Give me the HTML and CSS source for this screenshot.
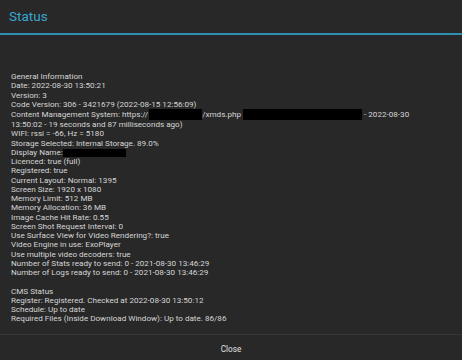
FILE: index.html
```html
<!DOCTYPE html>
<html>
<head>
<meta charset="utf-8">
<link rel="stylesheet" href="styles.css">
</head>
<body>
<div class="dialog">
  <header class="head">
    <h1 class="title">Status</h1>
  </header>
  <main class="body">
    <div class="info">General Information<br>Date: 2022-08-30 13:50:21<br>Version: 3<br>Code Version: 306 - 3421679 (2022-08-15 12:56:09)<br>Content Management System: https://<span class="redact r1"></span>/xmds.php <span class="redact r2"></span> - 2022-08-30<br>13:50:02 - 19 seconds and 87 milliseconds ago)<br>WIFI: rssi = -66, Hz = 5180<br>Storage Selected: Internal Storage. 89.0%<br>Display Name:<span class="redact r3"></span><br>Licenced: true (full)<br>Registered: true<br>Current Layout: Normal: 1395<br>Screen Size: 1920 x 1080<br>Memory Limit: 512 MB<br>Memory Allocation: 36 MB<br>Image Cache Hit Rate: 0.55<br>Screen Shot Request Interval: 0<br>Use Surface View for Video Rendering?: true<br>Video Engine in use: ExoPlayer<br>Use multiple video decoders: true<br>Number of Stats ready to send: 0 - 2021-08-30 13:46:29<br>Number of Logs ready to send: 0 - 2021-08-30 13:46:29<br><br>CMS Status<br>Register: Registered. Checked at 2022-08-30 13:50:12<br>Schedule: Up to date<br>Required Files (Inside Download Window): Up to date. 86/86</div>
  </main>
  <footer class="foot">
    <button class="close">Close</button>
  </footer>
</div>
</body>
</html>
```

FILE: styles.css
```css
html, body {
  margin: 0;
  padding: 0;
  background: #282828;
}
.dialog {
  width: 462px;
  height: 360px;
  display: flex;
  flex-direction: column;
  background: #282828;
  font-family: Roboto, "Noto Sans", sans-serif;
  overflow: hidden;
}
.head {
  height: 33px;
  border-bottom: 2px solid #2f8fb2;
  display: flex;
  align-items: center;
  padding-left: 9px;
  box-sizing: content-box;
}
.title {
  margin: 0;
  font-size: 13.5px;
  font-weight: 400;
  color: #38a6cf;
  line-height: 1;
  margin-top: 1px;
}
.body {
  flex: 1;
  padding: 37px 11px 0 11px;
  overflow: hidden;
}
.info {
  font-size: 8.1px;
  line-height: 9.25px;
  color: #d6d6d6;
  white-space: nowrap;
}
.redact {
  display: inline-block;
  background: #000;
  vertical-align: middle;
}
.r1 { width: 53px; height: 11px; margin-left: 1px; }
.r2 { width: 119px; height: 11px; }
.r3 { width: 63px; height: 8px; }
.foot {
  height: 25px;
  border-top: 1px solid #363636;
  display: flex;
  align-items: center;
  justify-content: center;
}
.close {
  background: none;
  border: none;
  padding: 0;
  color: #e0e0e0;
  font-family: Roboto, "Noto Sans", sans-serif;
  font-size: 8.2px;
  margin-top: 2px;
}
```
